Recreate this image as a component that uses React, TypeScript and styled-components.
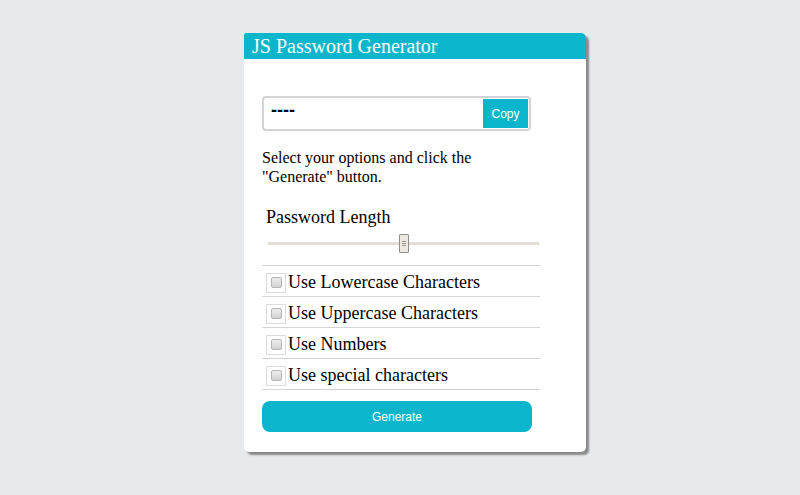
import React, {ChangeEvent, useState} from 'react';
import styled, {createGlobalStyle} from 'styled-components';

const GlobalStyle = createGlobalStyle`
  html, body {
    margin: 0;
    padding: 0;
    background: #e8e9ed;
    font-family: "Liberation Serif", "Times New Roman", serif;
  }
`

const options = [
    'Use Lowercase Characters',
    'Use Uppercase Characters',
    'Use Numbers',
    'Use special characters',
]

const App = () => {
    const [length, setLength] = useState(16);
    const [checked, setChecked] = useState<boolean[]>([false, false, false, false]);

    const onLengthChange = (e: ChangeEvent<HTMLInputElement>) => {
        setLength(Number(e.currentTarget.value))
    }
    const toggle = (i: number) => {
        setChecked(checked.map((c, idx) => idx === i ? !c : c))
    }

    return (
        <Page>
            <GlobalStyle/>
            <Card>
                <Header>JS Password Generator</Header>
                <Body>
                    <OutputBox>
                        <Output>----</Output>
                        <CopyButton>Copy</CopyButton>
                    </OutputBox>
                    <Hint>Select your options and click the "Generate" button.</Hint>
                    <LengthLabel>Password Length</LengthLabel>
                    <Slider type="range" min={4} max={28} value={length} onChange={onLengthChange}/>
                    <OptionList>
                        {options.map((o, i) => (
                            <OptionRow key={o}>
                                <BoxFrame>
                                    <Check type="checkbox" checked={checked[i]} onChange={() => toggle(i)}/>
                                </BoxFrame>
                                {o}
                            </OptionRow>
                        ))}
                    </OptionList>
                    <GenerateButton>Generate</GenerateButton>
                </Body>
            </Card>
        </Page>
    );
};

export default App;

const Page = styled.div`
  display: flex;
  justify-content: center;
  align-items: flex-start;
  padding: 33px 0 0 30px;
  height: 495px;
  box-sizing: border-box;
`

const Card = styled.div`
  width: 342px;
  background: #fff;
  border-radius: 2px 5px 5px 5px;
  box-shadow: 3px 3px 2px #8a8a8a;
  overflow: hidden;
`

const Header = styled.div`
  height: 26px;
  background: #0bb6cd;
  color: #fff;
  font-size: 20px;
  line-height: 26px;
  padding-left: 8px;
`

const Body = styled.div`
  display: flex;
  flex-direction: column;
  padding: 37px 46px 20px 18px;
`

const OutputBox = styled.div`
  display: flex;
  align-items: center;
  justify-content: space-between;
  width: 269px;
  height: 35px;
  box-sizing: border-box;
  border: 2px solid #d4d4d4;
  border-radius: 4px;
  padding: 1px;
`

const Output = styled.span`
  font-family: "Liberation Sans", Arial, sans-serif;
  font-weight: bold;
  font-size: 18px;
  padding-left: 6px;
  margin-top: -6px;
`

const CopyButton = styled.button`
  width: 45px;
  height: 29px;
  border: none;
  background: #0bb6cd;
  color: #fff;
  font-family: "Liberation Sans", Arial, sans-serif;
  font-size: 12px;
  padding: 0;
`

const Hint = styled.p`
  margin: 17px 0 0;
  font-size: 16px;
  line-height: 19px;
  color: #000;
`

const LengthLabel = styled.div`
  margin: 21px 0 0 4px;
  font-size: 18px;
  line-height: 20px;
`

const Slider = styled.input`
  -webkit-appearance: none;
  appearance: none;
  width: 271px;
  height: 22px;
  margin: 5px 0 0 6px;
  background: transparent;

  &::-webkit-slider-runnable-track {
    height: 3px;
    background: #e2ded6;
  }

  &::-webkit-slider-thumb {
    -webkit-appearance: none;
    width: 10px;
    height: 19px;
    margin-top: -8px;
    box-sizing: border-box;
    border: 1px solid #938e87;
    border-radius: 1px;
    background: linear-gradient(#9a958e, #9a958e) center 6px / 4px 1px no-repeat,
    linear-gradient(#9a958e, #9a958e) center 8px / 4px 1px no-repeat,
    linear-gradient(#9a958e, #9a958e) center 10px / 4px 1px no-repeat,
    #ece9e3;
  }
`

const OptionList = styled.div`
  display: flex;
  flex-direction: column;
  margin-top: 11px;
  width: 278px;
  border-top: 1px solid #d4d4d4;
`

const OptionRow = styled.label`
  display: flex;
  align-items: center;
  gap: 2px;
  height: 30px;
  box-sizing: border-box;
  padding: 3px 0 0 4px;
  height: 31px;
  border-bottom: 1px solid #d4d4d4;
  font-size: 18px;
`

const BoxFrame = styled.span`
  display: flex;
  align-items: center;
  justify-content: center;
  width: 18px;
  height: 18px;
  border: 1px solid #dcdcdc;
`

const Check = styled.input`
  -webkit-appearance: none;
  appearance: none;
  margin: 0;
  width: 11px;
  height: 11px;
  border: 1px solid #b5b5b5;
  border-radius: 2px;
  background: linear-gradient(#ededed, #d2d2d2);
`

const GenerateButton = styled.button`
  margin-top: 11px;
  width: 270px;
  height: 31px;
  border: none;
  border-radius: 8px;
  background: #0bb6cd;
  color: #fff;
  font-family: "Liberation Sans", Arial, sans-serif;
  font-size: 12px;
`
